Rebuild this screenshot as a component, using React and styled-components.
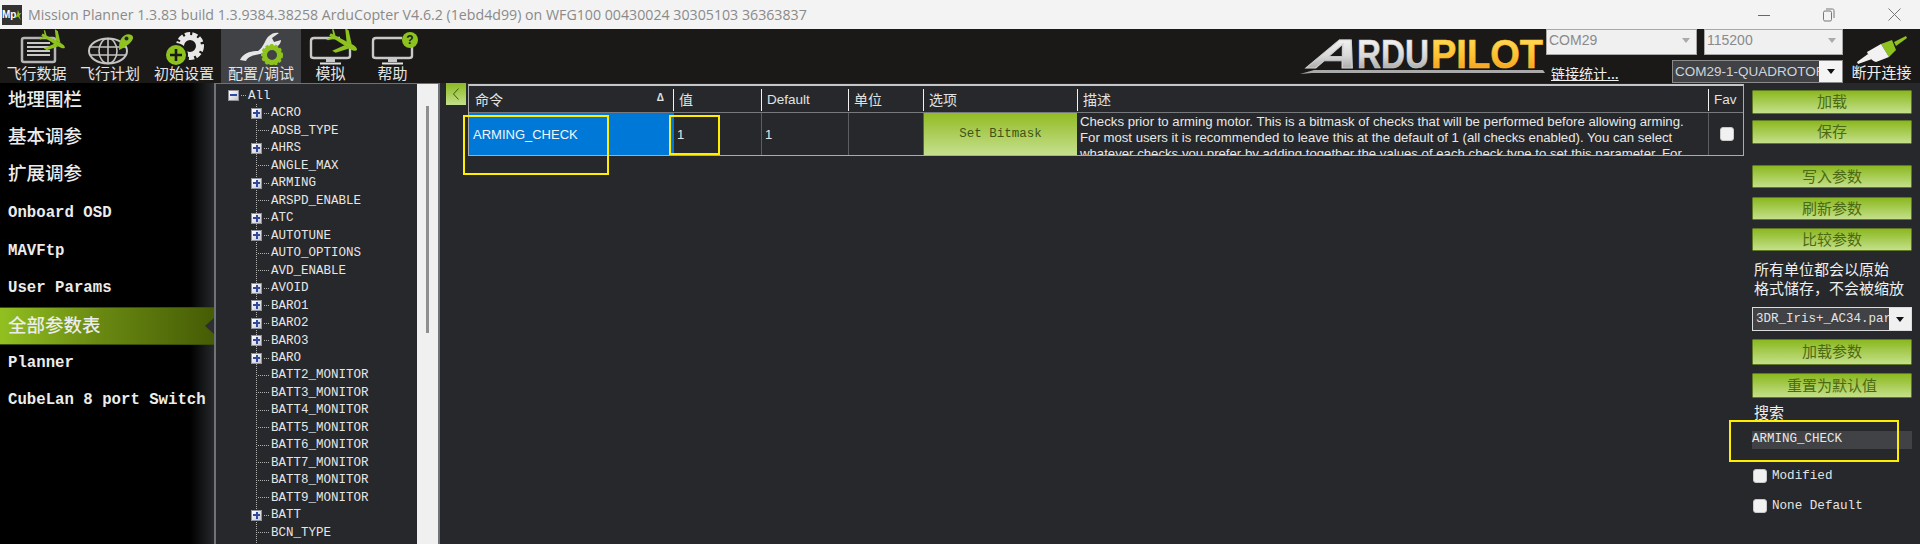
import React from "react";
import styled, { createGlobalStyle } from "styled-components";

const CJK = `"Noto Sans CJK SC", "Liberation Sans", sans-serif`;
const MONO = `"Liberation Mono", "Noto Sans CJK SC", monospace`;
const SANS = `"Liberation Sans", "Noto Sans CJK SC", sans-serif`;
const GREEN = "#8dc21f";

const tabs = [
  { label: "飞行数据", width: 73, icon: <DataIcon /> },
  { label: "飞行计划", width: 74, icon: <PlanIcon /> },
  { label: "初始设置", width: 74, icon: <SetupIcon /> },
  { label: "配置/调试", width: 80, icon: <ConfigIcon />, active: true },
  { label: "模拟", width: 59, icon: <SimIcon /> },
  { label: "帮助", width: 65, icon: <HelpIcon /> },
];

const sideItems = [
  { label: "地理围栏", cjk: true },
  { label: "基本调参", cjk: true },
  { label: "扩展调参", cjk: true },
  { label: "Onboard OSD" },
  { label: "MAVFtp" },
  { label: "User Params" },
  { label: "全部参数表", cjk: true, active: true },
  { label: "Planner" },
  { label: "CubeLan 8 port Switch" },
];

const treeItems = [
  ["ACRO", 1], ["ADSB_TYPE"], ["AHRS", 1], ["ANGLE_MAX"], ["ARMING", 1], ["ARSPD_ENABLE"],
  ["ATC", 1], ["AUTOTUNE", 1], ["AUTO_OPTIONS"], ["AVD_ENABLE"], ["AVOID", 1], ["BARO1", 1],
  ["BARO2", 1], ["BARO3", 1], ["BARO", 1], ["BATT2_MONITOR"], ["BATT3_MONITOR"], ["BATT4_MONITOR"],
  ["BATT5_MONITOR"], ["BATT6_MONITOR"], ["BATT7_MONITOR"], ["BATT8_MONITOR"], ["BATT9_MONITOR"],
  ["BATT", 1], ["BCN_TYPE"], ["BRD_TYPE"],
];

const columns = [
  { title: "命令", width: 204, sort: true },
  { title: "值", width: 88 },
  { title: "Default", width: 87 },
  { title: "单位", width: 75 },
  { title: "选项", width: 154 },
  { title: "描述", width: 631 },
  { title: "Fav", width: 37 },
];

const GlobalStyle = createGlobalStyle`
  html, body {
    margin: 0;
    padding: 0;
    background: #26282b;
  }
  * {
    box-sizing: border-box;
  }
`;

function Plane({ x, y, scale = 1 }) {
  return (
    <g transform={`translate(${x} ${y}) rotate(30) scale(${scale})`} fill={GREEN}>
      <path d="M-15 -1.5 L10 -2.5 C14 -2.5 16 -1 16 0 C16 1 14 2.5 10 2.5 L-15 1.5 Z" />
      <path d="M3 -2 L-5 -13 L-1 -13 L9 -2 Z" />
      <path d="M3 2 L-5 13 L-1 13 L9 2 Z" />
      <path d="M-12 -1 L-16 -6 L-14 -6 L-9 -1 Z" />
      <path d="M-12 1 L-16 6 L-14 6 L-9 1 Z" />
    </g>
  );
}

function DataIcon() {
  return (
    <svg width="60" height="36" viewBox="0 0 60 36">
      <rect x="15" y="9" width="33" height="24" rx="2" fill="none" stroke="#b5b5b5" strokeWidth="2.5" />
      <path d="M20 14H43M20 18H43M20 22H43M20 26H43" stroke="#c8c8c8" strokeWidth="1.8" />
      <Plane x={46} y={12} scale={0.85} />
    </svg>
  );
}

function PlanIcon() {
  return (
    <svg width="60" height="36" viewBox="0 0 60 36">
      <g fill="none" stroke="#c4c4c4" strokeWidth="1.6">
        <ellipse cx="28" cy="22" rx="19" ry="12.5" strokeWidth="2" />
        <ellipse cx="28" cy="22" rx="9" ry="12.5" />
        <path d="M28 10V34M10 18H46M10 26H46" />
      </g>
      <path d="M39 21 C39 16 39 14 41 10 C44 4 52 4 53 8 C54 12 46 18 39 21 Z" fill={GREEN} />
      <circle cx="46.5" cy="9.5" r="2" fill="#26282b" />
    </svg>
  );
}

function SetupIcon() {
  return (
    <svg width="60" height="36" viewBox="0 0 60 36">
      <circle cx="36" cy="17" r="11.5" fill="none" stroke="#e8e8e8" strokeWidth="5" strokeDasharray="5 2" />
      <circle cx="36" cy="17" r="8.5" fill="none" stroke="#e8e8e8" strokeWidth="5" />
      <circle cx="22" cy="26" r="12" fill="#1a1918" />
      <circle cx="22" cy="26" r="10" fill={GREEN} />
      <path d="M22 20V32M16 26H28" stroke="#1a1918" strokeWidth="2.6" />
    </svg>
  );
}

function ConfigIcon() {
  return (
    <svg width="60" height="36" viewBox="0 0 60 36">
      <path d="M9 31 C12 24 20 22 27 22 C33 18 34 10 38 7 C41 4 45 3 48 4 L41 9 L43 13 L50 11 C50 16 45 19 40 19 L33 24 C26 26 18 26 15 32 Z" fill="#e6e6e6" />
      <circle cx="41" cy="26" r="7.5" fill="none" stroke={GREEN} strokeWidth="5" />
      <circle cx="41" cy="26" r="10" fill="none" stroke={GREEN} strokeWidth="2" strokeDasharray="3 2" />
    </svg>
  );
}

function Monitor() {
  return (
    <>
      <path d="M39 9H13C11 9 10 10 10 12V27C10 28 11 29 13 29H46C48 29 49 28 49 27V18" fill="none" stroke="#c9c9c9" strokeWidth="2.4" />
      <path d="M25 30H34V33H25Z" fill="#c9c9c9" />
      <path d="M19 33.5H40V35.5H19Z" fill="#e2e2e2" />
    </>
  );
}

function SimIcon() {
  return (
    <svg width="60" height="36" viewBox="0 0 60 36">
      <Monitor />
      <Plane x={42} y={13} />
    </svg>
  );
}

function HelpIcon() {
  return (
    <svg width="60" height="36" viewBox="0 0 60 36">
      <Monitor />
      <circle cx="47" cy="11" r="8" fill={GREEN} />
      <text x="47" y="15" textAnchor="middle" fontFamily={SANS} fontSize="12" fontWeight="700" fill="#1a1a1a">?</text>
    </svg>
  );
}

function Logo() {
  return (
    <svg width="250" height="54" viewBox="0 0 250 54">
      <defs>
        <linearGradient id="silver" x1="0" y1="0" x2="0" y2="1">
          <stop offset="0" stopColor="#ffffff" />
          <stop offset="0.55" stopColor="#d8d8d8" />
          <stop offset="1" stopColor="#8f8f8f" />
        </linearGradient>
        <linearGradient id="gold" x1="0" y1="0" x2="0" y2="1">
          <stop offset="0" stopColor="#ffe568" />
          <stop offset="0.55" stopColor="#fdc02f" />
          <stop offset="1" stopColor="#f2901a" />
        </linearGradient>
      </defs>
      <text transform="translate(8 39) skewX(-30)" textLength="50" lengthAdjust="spacingAndGlyphs" fontFamily={SANS} fontWeight="700" fontSize="41" fill="url(#silver)" stroke="#cfcfcf" strokeWidth="0.8">A</text>
      <text x="61" y="39" textLength="72" lengthAdjust="spacingAndGlyphs" fontFamily={SANS} fontWeight="700" fontSize="41" fill="url(#silver)" stroke="#cfcfcf" strokeWidth="0.6">RDU</text>
      <text x="135" y="39" textLength="112" lengthAdjust="spacingAndGlyphs" fontFamily={SANS} fontWeight="700" fontSize="41" fill="url(#gold)" stroke="#fdc02f" strokeWidth="0.6">PILOT</text>
      <path d="M4 45 L18 41 H247 L249 44 H16 Z" fill="#a9a9a9" />
    </svg>
  );
}

function PlugIcon() {
  return (
    <svg width="56" height="36" viewBox="0 0 56 36">
      <path d="M40 13 L52 7 L53 9 L42 17 Z" fill={GREEN} />
      <path d="M27 15 L38 11 L42 21 L35 28 Z" fill={GREEN} />
      <path d="M13 23 L27 15 L35 28 L22 33 C18 32 15 28 13 23 Z" fill="#f2f2f2" />
      <path d="M14 25 L3 33 L4 35 L18 30 Z" fill="#f2f2f2" />
    </svg>
  );
}

function Arrow({ color }) {
  return (
    <svg width="8" height="5" viewBox="0 0 8 5">
      <path d="M0 0H8L4 5Z" fill={color} />
    </svg>
  );
}

export default function App() {
  return (
    <>
      <GlobalStyle />
      <Page>
        <TitleBar>
          <AppBadge>
            Mp
            <svg width="9" height="14" viewBox="0 0 9 14">
              <path d="M4 0L6 5L9 4L6 8L8 14L4 9L0 11L3 6Z" fill={GREEN} />
            </svg>
          </AppBadge>
          <TitleText>
            Mission Planner 1.3.83 build 1.3.9384.38258 ArduCopter V4.6.2 (1ebd4d99) on WFG100 00430024 30305103 36363837
          </TitleText>
          <WindowControls>
            <svg width="12" height="12" viewBox="0 0 12 12">
              <path d="M0 6.5H12" stroke="#666" />
            </svg>
            <svg width="12" height="14" viewBox="0 0 12 14">
              <rect x="0.5" y="3" width="8" height="10" rx="1.5" fill="none" stroke="#777" />
              <path d="M3 1H9.5C10.5 1 11 1.5 11 2.5V10" fill="none" stroke="#777" />
            </svg>
            <svg width="13" height="13" viewBox="0 0 13 13">
              <path d="M0.5 0.5L12.5 12.5M12.5 0.5L0.5 12.5" stroke="#777" />
            </svg>
          </WindowControls>
        </TitleBar>

        <Toolbar>
          {tabs.map((tab) => (
            <Tab key={tab.label} $width={tab.width} $active={tab.active}>
              {tab.icon}
              <TabLabel>{tab.label}</TabLabel>
            </Tab>
          ))}
          <LogoWrap>
            <Logo />
          </LogoWrap>
          <Ports>
            <PortRow>
              <LightCombo $width={151}>
                COM29
                <Arrow color="#aaa" />
              </LightCombo>
              <LightCombo $width={139}>
                115200
                <Arrow color="#aaa" />
              </LightCombo>
            </PortRow>
            <PortRow>
              <StatsLink>链接统计...</StatsLink>
              <DarkCombo>
                <span>COM29-1-QUADROTOR</span>
                <ComboArrow>
                  <Arrow color="#111" />
                </ComboArrow>
              </DarkCombo>
            </PortRow>
          </Ports>
          <Connect>
            <PlugIcon />
            <ConnectLabel>断开连接</ConnectLabel>
          </Connect>
        </Toolbar>

        <Body>
          <Sidebar>
            {sideItems.map((item) => (
              <SideItem key={item.label} $active={item.active} $cjk={item.cjk}>
                {item.label}
              </SideItem>
            ))}
          </Sidebar>

          <TreePanel>
            <TreeScroll>
              <TreeRow>
                <Expander $open />
                <Dots $short />
                All
              </TreeRow>
              <TreeChildren>
                {treeItems.map(([name, group]) => (
                  <TreeRow key={name}>
                    {group ? <Expander /> : <Dots />}
                    {group && <Dots $short />}
                    {name}
                  </TreeRow>
                ))}
              </TreeChildren>
            </TreeScroll>
            <ScrollBar>
              <ScrollThumb />
            </ScrollBar>
          </TreePanel>

          <Main>
            <Collapse>
              <svg width="8" height="12" viewBox="0 0 8 12">
                <path d="M6.5 0.5L1.5 6L6.5 11.5" fill="none" stroke="#3f5a0c" />
              </svg>
            </Collapse>

            <Grid>
              <HeadRow>
                {columns.map((col) => (
                  <HeadCell key={col.title} $width={col.width} $latin={col.title === "Default" || col.title === "Fav"}>
                    {col.title}
                    {col.sort && <SortMark>Δ</SortMark>}
                  </HeadCell>
                ))}
              </HeadRow>
              <DataRow>
                <NameCell $width={204}>ARMING_CHECK</NameCell>
                <Cell $width={88}>1</Cell>
                <Cell $width={87}>1</Cell>
                <Cell $width={75} />
                <OptionCell $width={154}>Set Bitmask</OptionCell>
                <DescCell $width={631}>
                  <div>Checks prior to arming motor. This is a bitmask of checks that will be performed before allowing arming.</div>
                  <div>For most users it is recommended to leave this at the default of 1 (all checks enabled). You can select</div>
                  <div>whatever checks you prefer by adding together the values of each check type to set this parameter. For</div>
                </DescCell>
                <FavCell $width={37}>
                  <CheckBox />
                </FavCell>
              </DataRow>
            </Grid>

            <Actions>
              <GreenButton $h={24} $mt={7}>加载</GreenButton>
              <GreenButton $h={24} $mt={6}>保存</GreenButton>
              <GreenButton $h={23} $mt={21}>写入参数</GreenButton>
              <GreenButton $h={23} $mt={9}>刷新参数</GreenButton>
              <GreenButton $h={23} $mt={8}>比较参数</GreenButton>
              <Note>
                所有单位都会以原始
                <br />
                格式储存，不会被缩放
              </Note>
              <FileCombo>
                <FileName>3DR_Iris+_AC34.par</FileName>
                <FileArrow>
                  <Arrow color="#111" />
                </FileArrow>
              </FileCombo>
              <GreenButton $h={26} $mt={8}>加载参数</GreenButton>
              <GreenButton $h={25} $mt={8}>重置为默认值</GreenButton>
              <SearchLabel>搜索</SearchLabel>
              <SearchBox>ARMING_CHECK</SearchBox>
              <CheckRow $mt={19}>
                <CheckBox />
                Modified
              </CheckRow>
              <CheckRow $mt={15}>
                <CheckBox />
                None Default
              </CheckRow>
            </Actions>
          </Main>

          <Marker $left={463} $top={32} $width={146} $height={60} />
          <Marker $left={669} $top={32} $width={51} $height={40} />
          <Marker $left={1729} $top={337} $width={170} $height={42} />
        </Body>
      </Page>
    </>
  );
}

const Page = styled.div`
  width: 1920px;
  height: 544px;
  overflow: hidden;
  display: flex;
  flex-direction: column;
  background: #26282b;
`;

const TitleBar = styled.div`
  height: 29px;
  flex: none;
  display: flex;
  align-items: center;
  padding-left: 2px;
  background: #f3f3f3;
`;

const AppBadge = styled.div`
  width: 20px;
  height: 20px;
  display: flex;
  align-items: center;
  background: #333;
  color: #fff;
  font: 700 10px ${SANS};
  svg {
    margin-left: -1px;
  }
`;

const TitleText = styled.div`
  margin-left: 6px;
  color: #8a8a8a;
  font: 14.2px "Open Sans", sans-serif;
  white-space: nowrap;
`;

const WindowControls = styled.div`
  margin-left: auto;
  width: 162px;
  padding: 0 19px 0 0;
  display: flex;
  align-items: center;
  justify-content: space-between;
`;

const Toolbar = styled.div`
  height: 54px;
  flex: none;
  display: flex;
  background: #1a1918;
`;

const Tab = styled.div`
  width: ${({ $width }) => $width}px;
  flex: none;
  display: flex;
  flex-direction: column;
  align-items: center;
  background: ${({ $active }) => ($active ? "#404246" : "transparent")};
`;

const TabLabel = styled.div`
  margin-top: -1px;
  color: #e4e4e4;
  font: 15px/18px ${CJK};
  white-space: nowrap;
`;

const LogoWrap = styled.div`
  margin-left: auto;
  display: flex;
`;

const Ports = styled.div`
  width: 297px;
  flex: none;
  display: flex;
  flex-direction: column;
  gap: 5px;
`;

const PortRow = styled.div`
  display: flex;
  justify-content: space-between;
  align-items: center;
`;

const LightCombo = styled.div`
  width: ${({ $width }) => $width}px;
  height: 26px;
  padding: 0 6px 4px 2px;
  display: flex;
  align-items: center;
  justify-content: space-between;
  background: #f0f0f0;
  border: 1px solid #a8a8a8;
  color: #8a8a8a;
  font: 14px ${SANS};
`;

const StatsLink = styled.div`
  margin-left: 5px;
  margin-top: 3px;
  color: #f0f0f0;
  text-decoration: underline;
  font: 14px ${CJK};
`;

const DarkCombo = styled.div`
  width: 171px;
  height: 23px;
  display: flex;
  align-items: stretch;
  background: #404246;
  border: 1px solid #8a8a8a;
  color: #cfd4dc;
  font: 13.5px/21px ${SANS};
  span {
    flex: 1;
    padding-left: 2px;
    overflow: hidden;
    white-space: nowrap;
  }
`;

const ComboArrow = styled.div`
  width: 23px;
  flex: none;
  display: flex;
  align-items: center;
  justify-content: center;
  background: #f4f4f4;
`;

const Connect = styled.div`
  width: 77px;
  flex: none;
  display: flex;
  flex-direction: column;
  align-items: center;
  color: #eee;
`;

const ConnectLabel = styled.div`
  margin-top: -3px;
  font: 15px/20px ${CJK};
`;

const Body = styled.div`
  position: relative;
  flex: 1;
  min-height: 0;
  display: flex;
`;

const Sidebar = styled.div`
  width: 214px;
  flex: none;
  background: linear-gradient(90deg, #000 0, #000 190px, #26282b 100%);
`;

const SideItem = styled.div`
  position: relative;
  height: 37.4px;
  padding: 0 0 ${({ $cjk, $active }) => ($active ? "4px" : $cjk ? "8px" : "1px")} 8px;
  display: flex;
  align-items: center;
  color: #ececec;
  font: ${({ $cjk }) => ($cjk ? `500 18.5px ${CJK}` : `700 15.7px ${MONO}`)};
  white-space: nowrap;
  ${({ $active }) =>
    $active &&
    `
    background: linear-gradient(90deg, #92c020 0, #6a8a12 45%, #465c05 100%);
    border-top: 1px solid #3b4d08;
    border-bottom: 1px solid #3b4d08;
    &::after {
      content: "";
      position: absolute;
      right: 0;
      top: 10px;
      border: 8px solid transparent;
      border-right: 9px solid #2c2e31;
      border-left: 0;
    }
  `}
`;

const TreePanel = styled.div`
  width: 226px;
  flex: none;
  display: flex;
  border-left: 2px solid #6f7276;
  border-right: 2px solid #6f7276;
  border-top: 1px solid #6f7276;
  background: #26282b;
`;

const TreeScroll = styled.div`
  flex: 1;
  padding: 3px 0 0 12px;
  overflow: hidden;
  color: #e6e6e6;
  font: 12.5px ${MONO};
`;

const TreeRow = styled.div`
  height: 17.49px;
  display: flex;
  align-items: center;
  white-space: nowrap;
`;

const TreeChildren = styled.div`
  margin-left: 28px;
  border-left: 1px dotted #b0b0b0;
`;

const Expander = styled.span`
  position: relative;
  width: 11px;
  height: 11px;
  flex: none;
  margin-left: ${({ $open }) => ($open ? "0" : "-6px")};
  background: linear-gradient(135deg, #fff, #c8c8d4);
  border: 1px solid #8f9296;
  &::before {
    content: "";
    position: absolute;
    left: 1px;
    top: 3px;
    width: 7px;
    height: 2px;
    background: #2f4aa0;
  }
  ${({ $open }) =>
    !$open &&
    `
    &::after {
      content: "";
      position: absolute;
      left: 3.5px;
      top: 1px;
      width: 2px;
      height: 7px;
      background: #2f4aa0;
    }
  `}
`;

const Dots = styled.span`
  width: ${({ $short }) => ($short ? "5px" : "11px")};
  flex: none;
  margin: ${({ $short }) => ($short ? "0 2px 0 2px" : "0 2px 0 1px")};
  border-top: 1px dotted #b0b0b0;
`;

const ScrollBar = styled.div`
  width: 21px;
  flex: none;
  display: flex;
  justify-content: center;
  padding-top: 22px;
  background: #f0f0f0;
`;

const ScrollThumb = styled.div`
  width: 3px;
  height: 227px;
  background: #8f8f8f;
`;

const Main = styled.div`
  flex: 1;
  min-width: 0;
  display: flex;
  align-items: flex-start;
  padding-left: 6px;
`;

const Collapse = styled.div`
  width: 20px;
  height: 22px;
  flex: none;
  display: flex;
  align-items: center;
  justify-content: center;
  background: linear-gradient(180deg, #8cb820, #c3e08a);
`;

const Grid = styled.div`
  width: 1276px;
  flex: none;
  margin: 1px 0 0 2px;
  border: 1px solid #a9abae;
  border-top: 2px solid #c4c6c8;
`;

const HeadRow = styled.div`
  height: 26px;
  display: flex;
`;

const HeadCell = styled.div`
  position: relative;
  width: ${({ $width }) => $width}px;
  flex: none;
  padding-left: 6px;
  display: flex;
  align-items: center;
  color: #e2e2e2;
  font: ${({ $latin }) => ($latin ? `13.5px ${SANS}` : `14px ${CJK}`)};
  &:not(:first-child)::before {
    content: "";
    position: absolute;
    left: 0;
    top: 3px;
    bottom: 1px;
    width: 1px;
    background: #f2f2f2;
  }
`;

const SortMark = styled.span`
  position: absolute;
  right: 9px;
  top: 6px;
  color: #e2e2e2;
  font: 700 10px ${SANS};
`;

const DataRow = styled.div`
  height: 43px;
  display: flex;
  border-top: 1px solid #77797c;
`;

const Cell = styled.div`
  width: ${({ $width }) => $width}px;
  flex: none;
  padding-left: 3px;
  display: flex;
  align-items: center;
  border-left: 1px solid #5c5e61;
  color: #e8e8e8;
  font: 13px ${SANS};
`;

const NameCell = styled(Cell)`
  padding-left: 4px;
  border-left: 0;
  background: #0078d7;
  color: #f2f6fa;
`;

const OptionCell = styled(Cell)`
  padding: 0;
  justify-content: center;
  background: linear-gradient(180deg, #93bb25, #c5e08e);
  color: #3f5414;
  font: 12.5px ${MONO};
`;

const DescCell = styled.div`
  width: ${({ $width }) => $width}px;
  flex: none;
  height: 100%;
  padding: 1px 0 0 3px;
  overflow: hidden;
  color: #e8e8e8;
  font: 13.2px/16px ${SANS};
  white-space: nowrap;
`;

const FavCell = styled(Cell)`
  padding: 0;
  justify-content: center;
`;

const CheckBox = styled.span`
  width: 14px;
  height: 14px;
  flex: none;
  background: #f1f1f1;
  border: 1px solid #c9c9c9;
  border-radius: 3px;
`;

const Actions = styled.div`
  width: 160px;
  flex: none;
  margin-left: 8px;
  display: flex;
  flex-direction: column;
`;

const GreenButton = styled.div`
  height: ${({ $h }) => $h}px;
  margin-top: ${({ $mt }) => $mt}px;
  padding-bottom: 3px;
  display: flex;
  align-items: center;
  justify-content: center;
  background: linear-gradient(180deg, #8bb81f, #c4e08a);
  border: 1px solid #5f7a22;
  border-radius: 1px;
  color: #4c6a14;
  font: 15px ${CJK};
`;

const Note = styled.div`
  margin: 8px 0 0 2px;
  color: #efefef;
  font: 15px/19px ${CJK};
  white-space: nowrap;
`;

const FileCombo = styled.div`
  height: 24px;
  margin-top: 10px;
  display: flex;
  background: #404246;
  border: 1px solid #dcdcdc;
`;

const FileName = styled.div`
  flex: 1;
  min-width: 0;
  padding-left: 3px;
  overflow: hidden;
  color: #e4e4e4;
  font: 12.5px/22px ${MONO};
  white-space: nowrap;
`;

const FileArrow = styled.div`
  width: 22px;
  flex: none;
  display: flex;
  align-items: center;
  justify-content: center;
  background: #f0f0f0;
`;

const SearchLabel = styled.div`
  margin: 4px 0 0 2px;
  color: #efefef;
  font: 15px/20px ${CJK};
`;

const SearchBox = styled.div`
  height: 18px;
  margin-top: 9px;
  background: #404246;
  color: #e8e8e8;
  font: 12.5px/17px ${MONO};
`;

const CheckRow = styled.div`
  height: 15px;
  margin-top: ${({ $mt }) => $mt}px;
  padding-left: 1px;
  display: flex;
  align-items: center;
  gap: 5px;
  color: #e4e4e4;
  font: 12.6px ${MONO};
  white-space: nowrap;
`;

const Marker = styled.div`
  position: absolute;
  left: ${({ $left }) => $left}px;
  top: ${({ $top }) => $top}px;
  width: ${({ $width }) => $width}px;
  height: ${({ $height }) => $height}px;
  border: 2px solid #ffee00;
  pointer-events: none;
`;
